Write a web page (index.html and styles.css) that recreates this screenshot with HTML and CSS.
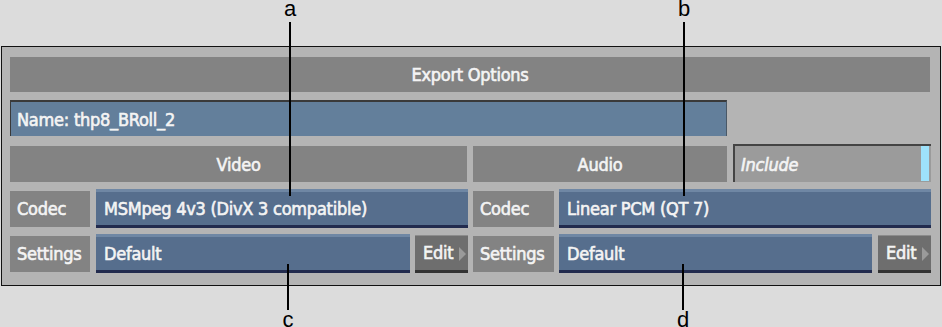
FILE: index.html
```html
<!DOCTYPE html>
<html lang="en">
<head>
    <meta charset="UTF-8">
    <title>Export Options</title>
    <link rel="stylesheet" href="styles.css">
</head>
<body>
    <div class="figure">
        <div class="panel">
            <div class="bar title">Export Options</div>

            <div class="row">
                <div class="name">Name: thp8_BRoll_2</div>
            </div>

            <div class="row">
                <div class="bar head video">Video</div>
                <div class="bar head audio">Audio</div>
                <div class="toggle">Include<span class="lamp"></span></div>
            </div>

            <div class="row">
                <div class="tag">Codec</div>
                <div class="value video-codec">MSMpeg 4v3 (DivX 3 compatible)</div>
                <div class="tag audio-tag">Codec</div>
                <div class="value grow">Linear PCM (QT 7)</div>
            </div>

            <div class="row">
                <div class="tag">Settings</div>
                <div class="value video-settings">Default</div>
                <div class="edit">Edit<span class="arrow"></span></div>
                <div class="tag audio-tag">Settings</div>
                <div class="value grow">Default</div>
                <div class="edit">Edit<span class="arrow"></span></div>
            </div>
        </div>

        <!-- callouts -->
        <div class="callout top" style="left: 289px;"><span>a</span></div>
        <div class="callout top" style="left: 683px;"><span>b</span></div>
        <div class="callout bottom" style="left: 287px;"><span>c</span></div>
        <div class="callout bottom" style="left: 682px;"><span>d</span></div>
    </div>
</body>
</html>
```

FILE: styles.css
```css
body {
    margin: 0;
    background-color: #dcdcdc;
    font-family: "DejaVu Sans Condensed", "DejaVu Sans", sans-serif;
    font-size: 18px;
    letter-spacing: -0.25px;
    color: #f4f4f4;
    -webkit-text-stroke: 0.6px #f4f4f4;
}
.figure {
    position: relative;
    width: 942px;
    height: 327px;
    padding-top: 46px;
    box-sizing: border-box;
}
.panel {
    margin-left: 1px;
    width: 940px;
    height: 240px;
    box-sizing: border-box;
    border: 1px solid #111;
    background-color: #b4b4b4;
    padding: 10px 9px 0 8px;
}
.row {
    display: flex;
    align-items: center;
}
.bar {
    background-color: #838383;
    display: flex;
    align-items: center;
    justify-content: center;
    height: 35px;
}
.title {
    width: 920px;
}
.name {
    margin-top: 8px;
    width: 717px;
    height: 36px;
    box-sizing: border-box;
    background-color: #637f9b;
    border-top: 2px solid #3a3a3a;
    border-left: 1px solid #3a3a3a;
    border-right: 1px solid #4a5866;
    padding-left: 6px;
    display: flex;
    align-items: center;
}
.row:nth-child(3) {
    margin-top: 8px;
    height: 38px;
}
.head {
    height: 36px;
    margin-top: 2px;
}
.video {
    width: 457px;
}
.audio {
    width: 254px;
    margin-left: 6px;
}
.toggle {
    position: relative;
    margin-left: 6px;
    width: 198px;
    height: 38px;
    box-sizing: border-box;
    background-color: #9b9b9b;
    border-top: 2px solid #444;
    border-left: 2px solid #444;
    padding-left: 6px;
    font-style: italic;
    display: flex;
    align-items: center;
}
.lamp {
    position: absolute;
    right: 2px;
    top: 0;
    bottom: 1px;
    width: 8px;
    background-color: #9ee2fb;
}
.row:nth-child(4) {
    margin-top: 7px;
    height: 39px;
}
.row:nth-child(5) {
    margin-top: 6px;
    height: 39px;
}
.tag {
    width: 80px;
    height: 36px;
    background-color: #838383;
    padding-left: 7px;
    box-sizing: border-box;
    display: flex;
    align-items: center;
}
.audio-tag {
    margin-left: 5px;
    width: 81px;
}
.value {
    margin-left: 6px;
    height: 39px;
    box-sizing: border-box;
    background-color: #566e8d;
    border-top: 3px solid #6f87a4;
    border-bottom: 3px solid #222b4e;
    padding-left: 8px;
    display: flex;
    align-items: center;
}
.video-codec {
    width: 372px;
}
.video-settings {
    width: 314px;
}
.audio-tag + .value {
    margin-left: 5px;
}
.grow {
    flex: 1;
}
.edit {
    position: relative;
    margin-left: 5px;
    width: 53px;
    height: 38px;
    box-sizing: border-box;
    background-color: #6e6e6e;
    border-top: 1px solid #8c8c8c;
    border-bottom: 3px solid #333;
    padding-left: 8px;
    display: flex;
    align-items: center;
}
.value.grow + .edit {
    margin-left: 6px;
}
.arrow {
    position: absolute;
    right: 2px;
    top: 11px;
    border-left: 7px solid #9a9a9a;
    border-top: 7px solid transparent;
    border-bottom: 7px solid transparent;
}
.callout {
    position: absolute;
    width: 2px;
    background-color: #000;
}
.callout span {
    position: absolute;
    left: -10px;
    width: 22px;
    text-align: center;
    font-family: "Liberation Sans", Arial, sans-serif;
    font-size: 22px;
    letter-spacing: 0;
    color: #000;
    -webkit-text-stroke: 0;
    line-height: 20px;
}
.callout.top {
    top: 22px;
    height: 174px;
}
.callout.top span {
    top: -23px;
}
.callout.bottom {
    top: 264px;
    height: 46px;
}
.callout.bottom span {
    top: 46px;
}
```
